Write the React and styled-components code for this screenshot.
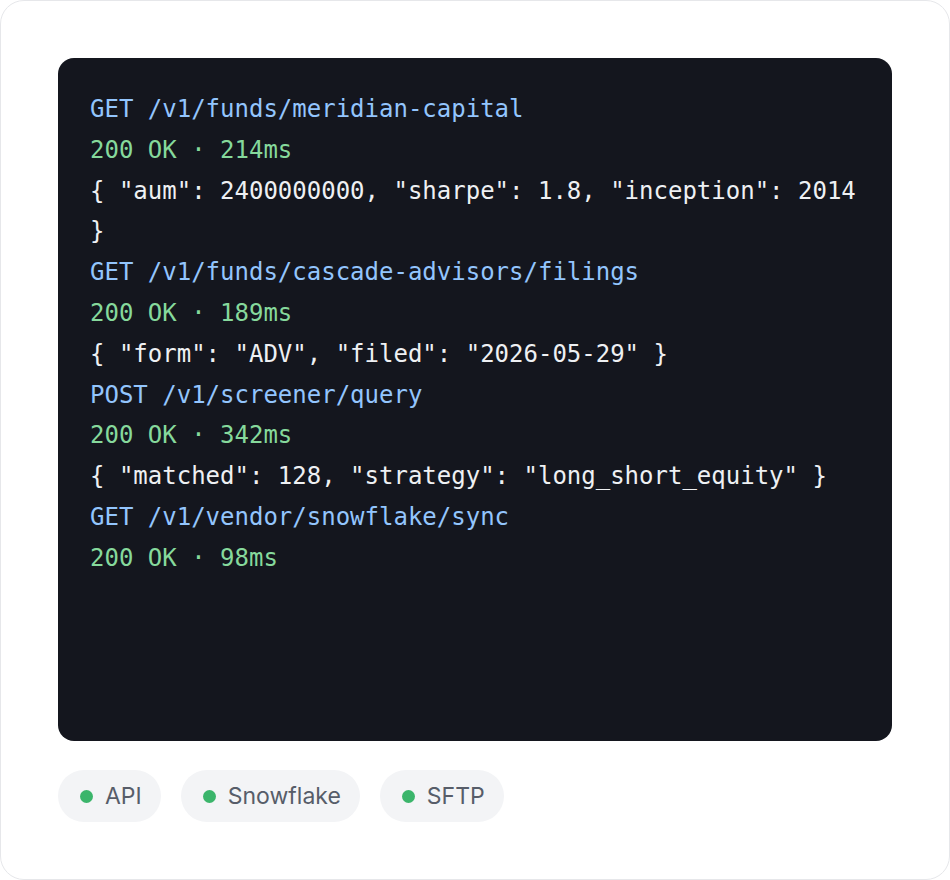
import React from "react";
import styled, { createGlobalStyle } from "styled-components";

const GlobalStyle = createGlobalStyle`
  html, body {
    margin: 0;
    padding: 0;
    background: #ffffff;
  }
  * {
    box-sizing: border-box;
  }
`;

const log = [
  { kind: "request", text: "GET /v1/funds/meridian-capital" },
  { kind: "status", text: "200 OK · 214ms" },
  { kind: "body", text: '{ "aum": 2400000000, "sharpe": 1.8, "inception": 2014 }' },
  { kind: "request", text: "GET /v1/funds/cascade-advisors/filings" },
  { kind: "status", text: "200 OK · 189ms" },
  { kind: "body", text: '{ "form": "ADV", "filed": "2026-05-29" }' },
  { kind: "request", text: "POST /v1/screener/query" },
  { kind: "status", text: "200 OK · 342ms" },
  { kind: "body", text: '{ "matched": 128, "strategy": "long_short_equity" }' },
  { kind: "request", text: "GET /v1/vendor/snowflake/sync" },
  { kind: "status", text: "200 OK · 98ms" },
];

const sources = ["API", "Snowflake", "SFTP"];

const App = () => {
  return (
    <>
      <GlobalStyle />
      <Card>
        <Terminal>
          {log.map((line, i) => (
            <Line key={i} $kind={line.kind}>
              {line.text}
            </Line>
          ))}
        </Terminal>
        <Pills>
          {sources.map((s) => (
            <Pill key={s}>
              <Dot />
              {s}
            </Pill>
          ))}
        </Pills>
      </Card>
    </>
  );
};

export default App;

// Styled Components
const Card = styled.div`
  width: 950px;
  height: 880px;
  border: 1px solid #e6e7ea;
  border-radius: 24px;
  background: #ffffff;
  padding: 57px;
  display: flex;
  flex-direction: column;
  gap: 29px;
`;

const Terminal = styled.div`
  height: 683px;
  background: #14161e;
  border-radius: 16px;
  padding: 31px 32px;
  font-family: "DejaVu Sans Mono", "Liberation Mono", monospace;
  font-size: 24px;
  line-height: 40.8px;
`;

const colors = {
  request: "#93c5fd",
  status: "#86d99c",
  body: "#eef0f3",
};

const Line = styled.div`
  color: ${(p) => colors[p.$kind]};
  white-space: pre-wrap;
`;

const Pills = styled.div`
  display: flex;
  gap: 20px;
`;

const Pill = styled.div`
  display: flex;
  align-items: center;
  gap: 12px;
  height: 52px;
  padding: 0 19px 0 22px;
  border-radius: 999px;
  background: #f3f4f6;
  font-family: Inter, "Noto Sans", sans-serif;
  font-size: 23px;
  color: #575d69;
`;

const Dot = styled.span`
  width: 13px;
  height: 13px;
  border-radius: 50%;
  background: #3bb56b;
`;
